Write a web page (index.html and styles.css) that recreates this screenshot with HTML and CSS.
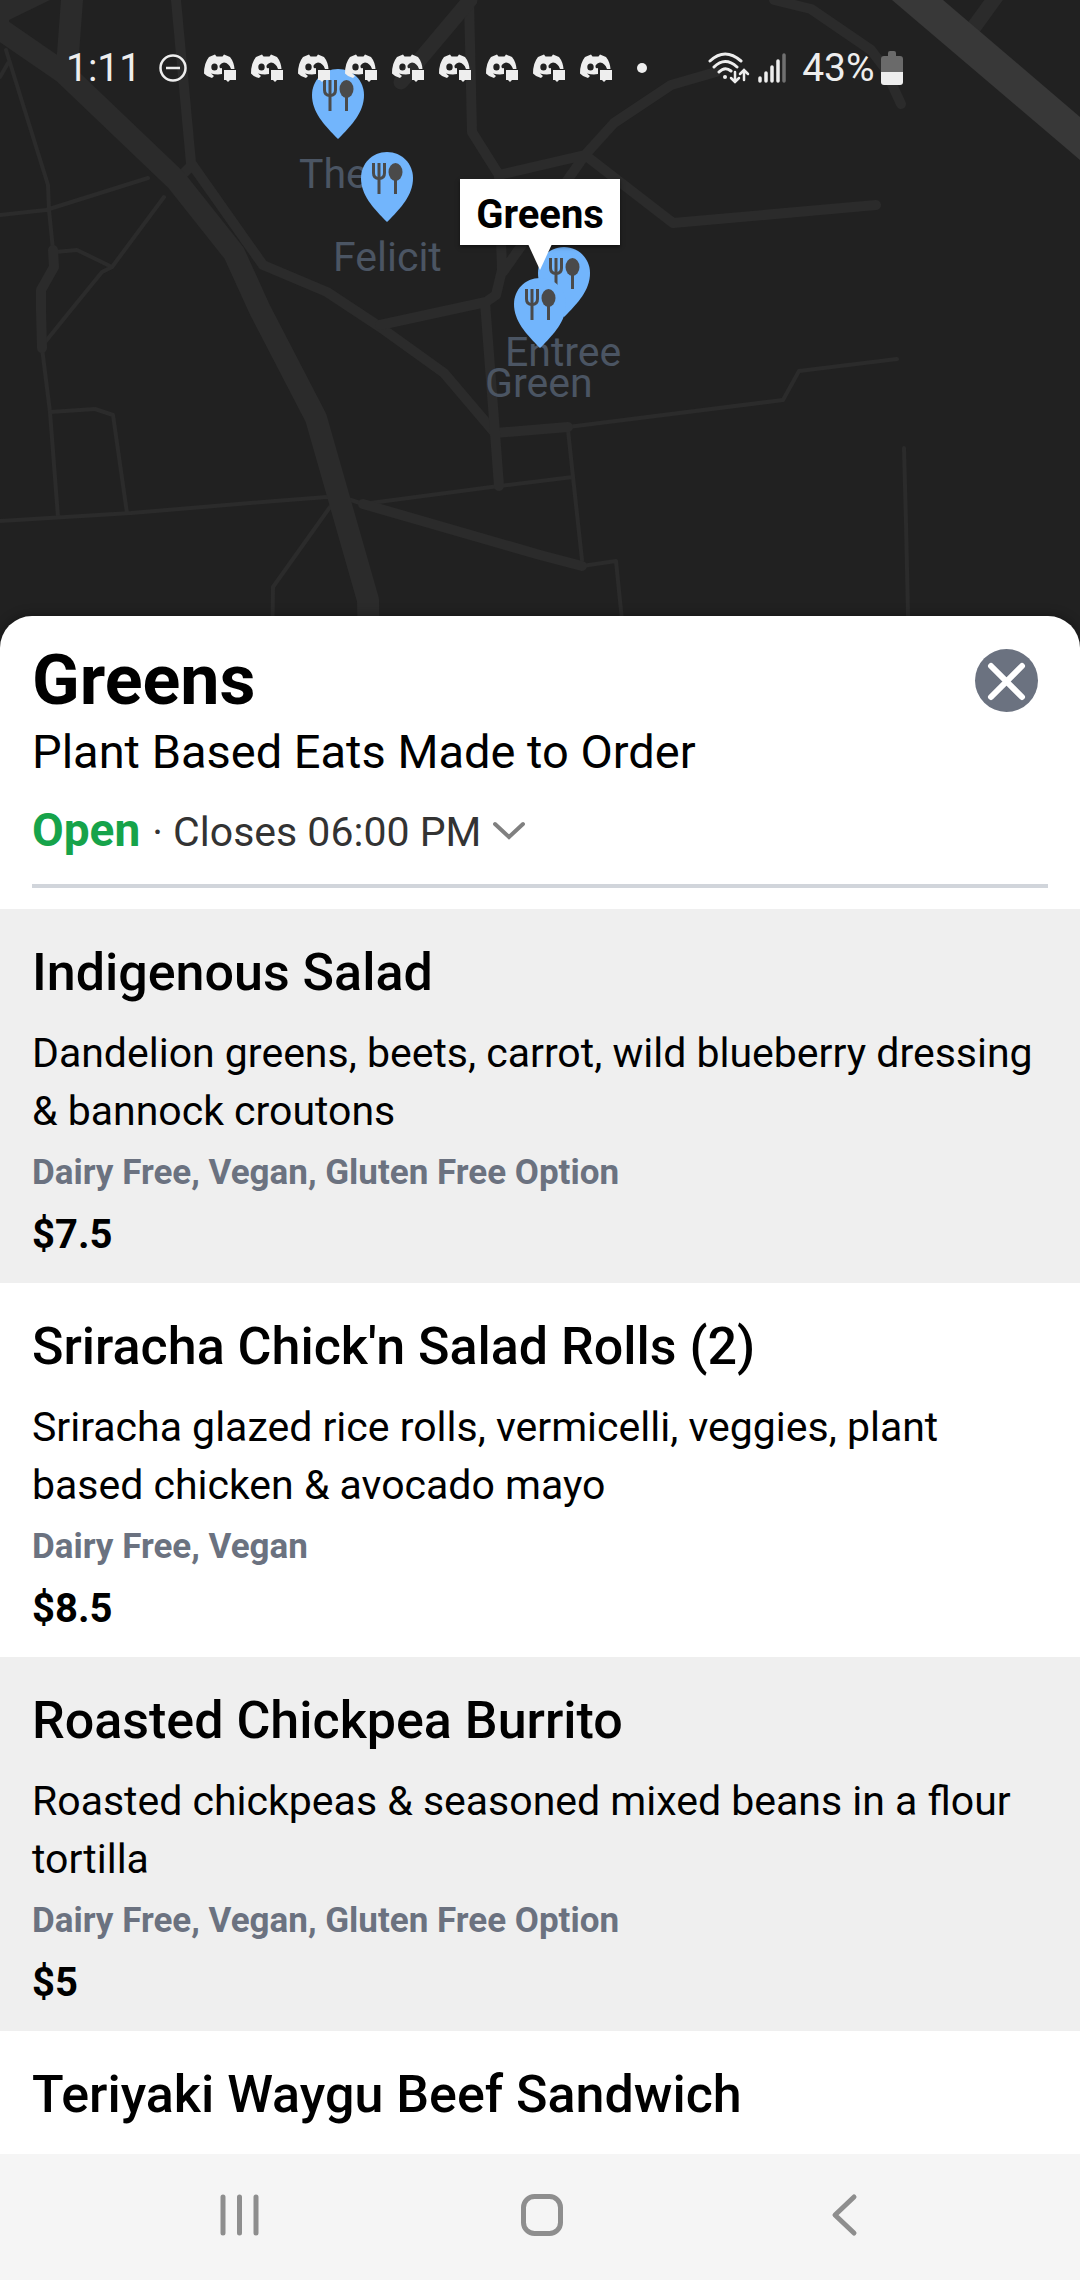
FILE: index.html
```html
<!DOCTYPE html>
<html lang="en">
<head>
<meta charset="utf-8">
<meta name="viewport" content="width=device-width, initial-scale=1">
<title>Greens</title>
<link rel="stylesheet" href="styles.css">
</head>
<body>
<svg class="defs" aria-hidden="true">
  <symbol id="pin" viewBox="0 0 52 70">
    <path fill="#72b5fc" d="M26 0C41 0 52 12 52 26C52 43 40 56 26 70C12 56 0 43 0 26C0 12 11 0 26 0Z"/>
    <g fill="none" stroke="#4a4a4a">
      <path stroke-width="3" d="M12.500 11V21Q12.500 26.500 18 26.500Q23.500 26.500 23.500 21V11"/>
      <path stroke-width="3" d="M18 11V42M34.500 24V42"/>
    </g>
    <ellipse cx="34.500" cy="20" rx="7" ry="9" fill="#4a4a4a"/>
  </symbol>
  <symbol id="chat" viewBox="0 0 32 28">
    <path fill="#eeeeee" fill-rule="evenodd" d="M5 3L11 0.500L12.500 2.500H18.500L20 0.500L26 3Q30 8 30.500 15H27Q25 9 20 8.500Q15 10 15.500 13Q16 15 18 14V20Q13 21 7 19.500L10 22L8 24Q3 23 0 19.500Q0 9 5 3ZM10.500 9.500A3.200 3.500 0 1 0 10.500 16.500A3.200 3.500 0 1 0 10.500 9.500Z"/>
    <path fill="#eeeeee" d="M20 16H32V26H26L24 28L22 26H20Z"/>
  </symbol>
</svg>

<main class="screen">
  <section class="map" aria-label="Map">
    <svg class="roads" viewBox="0 0 1080 660" preserveAspectRatio="xMidYMin slice" aria-hidden="true">
      <g fill="none" stroke="#2b2b2b" stroke-linejoin="round" stroke-linecap="round">
        <g stroke-width="4">
          <path d="M0 77L8 63M6 50L48 185L49 210L53 250M42 348L50 412L58 517M0 215L46 210L148 178M164 197L112 267L77 250L55 252M112 267L102 272L71 310L46 341"/>
          <path d="M50 412L95 409L113 415L127 513M0 521L131 513L275 501L327 497L351 500L363 504L499 486L573 477M330 507L273 587L272 660"/>
          <path d="M568 427L783 400L799 371L897 359M568 430L573 477L582 560M582 566L616 561L626 660M904 448L906 523L909 660"/>
        </g>
        <g stroke-width="10">
          <path d="M53 250L54 267L41 290L41 310L42 348M176 0L191 163L263 265L327 292L380 327L444 373L495 433L568 427M191 166L177 180"/>
          <path d="M469 0L472 132L499 175L585 155L614 123L671 85L716 72M585 155L673 223L876 205M585 155L503 272M499 175L502 270L496 295L486 302L380 325M485 302L495 433L499 486M363 504L540 555L582 566"/>
          <path d="M774 0L811 9L871 50L884 67L901 104"/>
        </g>
        <path stroke-width="15" d="M470 0L401 82M1003 -13L974 27"/>
        <path stroke-width="22" d="M72 0L67 67M-10 22L64 73L176 180L234 253L260 310L316 418L368 600L369 660"/>
      </g>
      <path fill="#2b2b2b" d="M0 0H50L9 20V30H0Z"/>
      <path fill="#383838" d="M892 0H943L1080 117V160Z"/>
    </svg>

    <span class="place place-the">The</span>
    <svg class="pin pin-the"><use href="#pin"/></svg>
    <svg class="pin pin-felicit"><use href="#pin"/></svg>
    <span class="place place-felicit">Felicit</span>
    <span class="place place-entree">Entree</span>
    <svg class="pin pin-entree"><use href="#pin"/></svg>
    <span class="place place-green">Green</span>
    <svg class="pin pin-green"><use href="#pin"/></svg>
    <div class="callout">Greens</div>

    <div class="status">
      <time class="clock">1:11</time>
      <svg class="dnd" viewBox="0 0 28 28" fill="none" stroke="#eeeeee" stroke-width="2.500"><circle cx="14" cy="14" r="12.500"/><path d="M7 14H21"/></svg>
      <div class="notices">
        <svg><use href="#chat"/></svg><svg><use href="#chat"/></svg><svg><use href="#chat"/></svg>
        <svg><use href="#chat"/></svg><svg><use href="#chat"/></svg><svg><use href="#chat"/></svg>
        <svg><use href="#chat"/></svg><svg><use href="#chat"/></svg><svg><use href="#chat"/></svg>
      </div>
      <i class="more"></i>
      <svg class="wifi" viewBox="0 0 42 32" fill="none" stroke="#eeeeee" stroke-width="3" stroke-linecap="round">
        <path d="M2 9Q17 -5 33 9M6 15Q17 4 29 15M11 20Q17 14 23 19"/>
        <circle cx="17" cy="25" r="2" fill="#eeeeee" stroke="none"/>
        <path stroke-width="2.500" d="M27 20V30M23 26L27 30L31 26M36 28V19M32 22L36 18L40 22"/>
      </svg>
      <svg class="signal" viewBox="0 0 28 30" stroke="#eeeeee" stroke-width="3.500" stroke-linecap="round"><path d="M2 25V28M8 20V28M14 14V28M20 8V28"/><path stroke="#707070" d="M26 2V28"/></svg>
      <span class="percent">43%</span>
      <svg class="battery" viewBox="0 0 22 34"><path fill="#6a6a6a" d="M7 5V2Q7 0 9 0H13Q15 0 15 2V5H19Q22 5 22 8V21H0V8Q0 5 3 5Z"/><path fill="#eeeeee" d="M0 21H22V31Q22 34 19 34H3Q0 34 0 31Z"/></svg>
    </div>
  </section>

  <section class="sheet">
    <header class="head">
      <div class="title-row">
        <h1>Greens</h1>
        <button class="close" type="button" aria-label="Close"><svg viewBox="0 0 63 63" fill="none" stroke="#ffffff" stroke-width="6" stroke-linecap="round"><path d="M16 17L47 48M47 17L16 48"/></svg></button>
      </div>
      <p class="tagline">Plant Based Eats Made to Order</p>
      <button class="hours" type="button"><strong>Open</strong><span>· Closes 06:00 PM</span><svg viewBox="0 0 32 20" fill="none" stroke="#808080" stroke-width="4" stroke-linecap="round"><path d="M2 3L16 16L30 3"/></svg></button>
    </header>
    <ul class="menu">
      <li>
        <h2>Indigenous Salad</h2>
        <p class="desc">Dandelion greens, beets, carrot, wild blueberry dressing &amp; bannock croutons</p>
        <p class="tags">Dairy Free, Vegan, Gluten Free Option</p>
        <p class="price">$7.5</p>
      </li>
      <li>
        <h2>Sriracha Chick'n Salad Rolls (2)</h2>
        <p class="desc">Sriracha glazed rice rolls, vermicelli, veggies, plant based chicken &amp; avocado mayo</p>
        <p class="tags">Dairy Free, Vegan</p>
        <p class="price">$8.5</p>
      </li>
      <li>
        <h2>Roasted Chickpea Burrito</h2>
        <p class="desc">Roasted chickpeas &amp; seasoned mixed beans in a flour tortilla</p>
        <p class="tags">Dairy Free, Vegan, Gluten Free Option</p>
        <p class="price">$5</p>
      </li>
      <li>
        <h2>Teriyaki Waygu Beef Sandwich</h2>
      </li>
    </ul>
  </section>

  <nav class="system" aria-label="System">
    <button type="button" aria-label="Recent apps"><svg viewBox="0 0 44 44" fill="none" stroke="#8e8e8e" stroke-width="5" stroke-linecap="round"><path d="M5 4V40M21.500 4V40M38 4V40"/></svg></button>
    <button type="button" aria-label="Home"><svg viewBox="0 0 44 44" fill="none" stroke="#8e8e8e" stroke-width="5"><rect x="3.500" y="3.500" width="37" height="37" rx="11"/></svg></button>
    <button type="button" aria-label="Back"><svg viewBox="0 0 44 44" fill="none" stroke="#8e8e8e" stroke-width="5" stroke-linecap="round" stroke-linejoin="round"><path d="M32 4L13 22L32 40"/></svg></button>
  </nav>
</main>
</body>
</html>
```
FILE: styles.css
```css
* { box-sizing: border-box; }

body {
  margin: 0;
  background: #ffffff;
  color: #000000;
  font-family: Roboto, "Noto Sans", sans-serif;
}

h1, h2, p, ul { margin: 0; padding: 0; }

button {
  padding: 0;
  border: 0;
  background: none;
  color: inherit;
  font: inherit;
  cursor: pointer;
}

svg { display: block; flex: none; }

.defs { position: absolute; width: 0; height: 0; }

.screen {
  display: flex;
  flex-direction: column;
  height: 100vh;
  overflow: hidden;
}

/* Map */
.map {
  position: relative;
  flex: none;
  height: 660px;
  background: #212121;
  overflow: hidden;
}

.roads { width: 100%; height: 100%; }

.pin { position: absolute; width: 52px; height: 70px; }
.pin-the { left: 312px; top: 69px; }
.pin-felicit { left: 361px; top: 152px; }
.pin-entree { left: 538px; top: 247px; }
.pin-green { left: 514px; top: 278px; }

.place {
  position: absolute;
  color: #4b5563;
  font-size: 41px;
  line-height: 48px;
}
.place-the { left: 299px; top: 150px; }
.place-felicit { left: 333px; top: 233px; }
.place-entree { left: 505px; top: 328px; }
.place-green { left: 485px; top: 359px; }

.callout {
  position: absolute;
  left: 460px;
  top: 179px;
  width: 160px;
  height: 66px;
  background: #ffffff;
  box-shadow: 0 2px 4px rgba(0, 0, 0, 0.5);
  font-size: 40px;
  font-weight: 700;
  line-height: 72px;
  text-align: center;
}
.callout::after {
  content: "";
  position: absolute;
  left: 68px;
  top: 65px;
  border: 12px solid transparent;
  border-top: 26px solid #ffffff;
  border-bottom: 0;
}

/* Status bar */
.status {
  position: absolute;
  inset: 44px 0 auto 0;
  display: flex;
  align-items: center;
  height: 48px;
  padding-left: 66px;
  color: #eeeeee;
  font-size: 39px;
  line-height: 48px;
}
.dnd { width: 28px; height: 28px; margin-left: 18px; }
.notices { display: flex; gap: 15px; margin-left: 17px; }
.notices svg { width: 32px; height: 28px; }
.more {
  width: 10px;
  height: 10px;
  margin-left: 25px;
  border-radius: 50%;
  background: #eeeeee;
}
.wifi { width: 42px; height: 32px; margin-left: 61px; }
.signal { width: 28px; height: 30px; margin-left: 8px; }
.percent { margin-left: 16px; }
.battery { width: 22px; height: 34px; margin-left: 6px; }

/* Sheet */
.sheet {
  position: relative;
  flex: 1;
  min-height: 0;
  margin-top: -44px;
  border-radius: 32px 32px 0 0;
  background: #ffffff;
  box-shadow: 0 0 12px rgba(0, 0, 0, 0.4);
  overflow: hidden;
}
.head {
  margin: 0 32px 21px;
  padding: 24px 0 24px;
  border-bottom: 4px solid #d1d5db;
}
.title-row {
  display: flex;
  align-items: center;
  justify-content: space-between;
  padding-right: 10px;
}
h1 { font-size: 70px; font-weight: 700; line-height: 80px; }
.close {
  width: 63px;
  height: 63px;
  border-radius: 50%;
  background: #6b7280;
}
.tagline { font-size: 47px; line-height: 64px; }
.hours {
  display: flex;
  align-items: baseline;
  gap: 12px;
  margin-top: 18px;
  color: #333333;
  font-size: 41px;
  line-height: 56px;
}
.hours strong { color: #16a34a; font-size: 46px; font-weight: 700; }
.hours svg { width: 32px; height: 20px; align-self: center; }

.menu { list-style: none; }
.menu li { height: 374px; padding: 24px 32px; }
.menu li:nth-child(odd) { background: #efefef; }
h2 { font-size: 52px; font-weight: 500; line-height: 80px; }
.desc { margin-top: 11px; font-size: 41px; line-height: 58px; }
.tags {
  margin-top: 8px;
  color: #6b7280;
  font-size: 35px;
  font-weight: 700;
  line-height: 50px;
}
.price { margin-top: 8px; font-size: 40px; font-weight: 700; line-height: 58px; }

/* System navigation */
.system {
  position: relative;
  flex: none;
  display: flex;
  align-items: center;
  justify-content: center;
  gap: 258px;
  height: 126px;
  padding: 0 0 4px 4px;
  background: #f5f5f5;
}
.system svg { width: 44px; height: 44px; }
```
